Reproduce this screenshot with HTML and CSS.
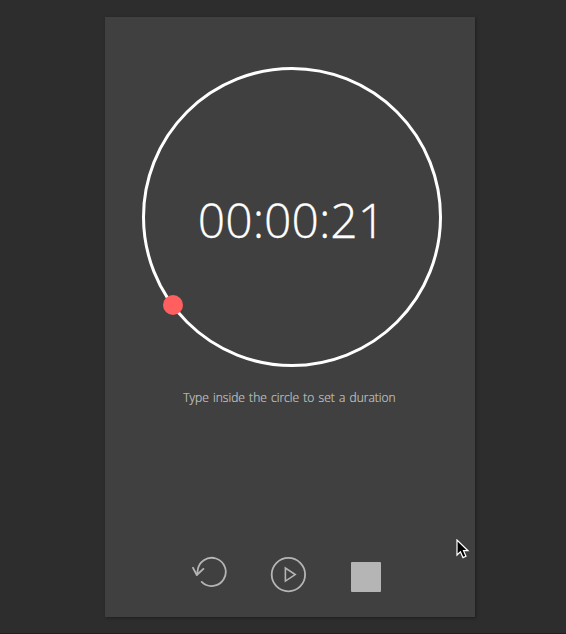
FILE: index.html
```html
<!DOCTYPE html>
<html lang="en">
<head>
<meta charset="utf-8">
<title>Timer</title>
<link rel="stylesheet" href="styles.css">
</head>
<body>
<main class="timer">
  <div class="dial">
    <span class="time">00:00:21</span>
    <span class="handle"></span>
  </div>
  <p class="hint">Type inside the circle to set a duration</p>
  <div class="controls">
    <button class="control reset" aria-label="Reset">
      <svg width="36" height="34" viewBox="0 0 36 34"><path d="M9.7 25.9A14.1 14.1 0 1 0 5.6 14.8L4.9 18.6"/><path d="M1 11.8L4.8 19L11.4 12.9"/></svg>
    </button>
    <button class="control play" aria-label="Play">
      <svg width="36" height="36" viewBox="0 0 36 36"><circle cx="18.4" cy="17.6" r="16.7"/><path d="M15.4 11.1V24.1L25.2 17.6Z"/></svg>
    </button>
    <button class="control stop" aria-label="Stop"></button>
  </div>
</main>
<svg class="pointer" width="14" height="20" viewBox="0 0 14 20"><path d="M1 1V16L4.4 12.8L7 18.6L10 17.3L7.5 11.7H12Z"/></svg>
</body>
</html>
```
FILE: styles.css
```css
* { box-sizing: border-box; }
body {
  margin: 0;
  height: 634px;
  padding: 17px 91px 17px 105px;
  overflow: hidden;
  background: #2d2d2d;
  border-bottom: 1px solid #251d21;
  font-family: "Open Sans", sans-serif;
}
.timer {
  width: 370px;
  height: 600px;
  padding: 50px 33px 0 37px;
  background: #404040;
  box-shadow: 1px 1px 3px rgba(0, 0, 0, .35);
}
.dial {
  position: relative;
  display: flex;
  align-items: center;
  justify-content: center;
  width: 300px;
  height: 300px;
  border: 3px solid #fff;
  border-radius: 50%;
}
.time {
  margin: 5px 0 0 -1px;
  color: #fff;
  font-size: 48px;
  font-weight: 300;
  line-height: 60px;
  -webkit-text-stroke: .3px #fff;
}
.handle {
  position: absolute;
  left: 18px;
  top: 225px;
  width: 20px;
  height: 20px;
  border-radius: 50%;
  background: #ff5f5f;
}
.hint {
  margin: 21px 0 0;
  padding-right: 5px;
  color: #c4c4c4;
  font-size: 12px;
  font-weight: 300;
  line-height: 20px;
  word-spacing: 1.1px;
  -webkit-text-stroke: .2px #c4c4c4;
  text-align: center;
  white-space: nowrap;
}
.controls {
  display: flex;
  align-items: flex-start;
  margin: 148px 0 0 50px;
}
.control {
  display: block;
  padding: 0;
  border: 0;
  background: none;
}
.control svg { display: block; }
.control path, .control circle {
  fill: none;
  stroke: #b5b5b5;
  stroke-width: 1.8;
  stroke-linecap: round;
  stroke-linejoin: round;
}
.play { margin: 1px 0 0 42px; }
.play path { stroke-width: 1.6; stroke-linejoin: miter; }
.stop {
  width: 30px;
  height: 30px;
  margin: 6px 0 0 45px;
  border-radius: 1px;
  background: #b5b5b5;
}
.pointer {
  position: absolute;
  left: 456px;
  top: 539px;
  fill: #000;
  stroke: #fff;
  stroke-width: 1.2;
}
```
